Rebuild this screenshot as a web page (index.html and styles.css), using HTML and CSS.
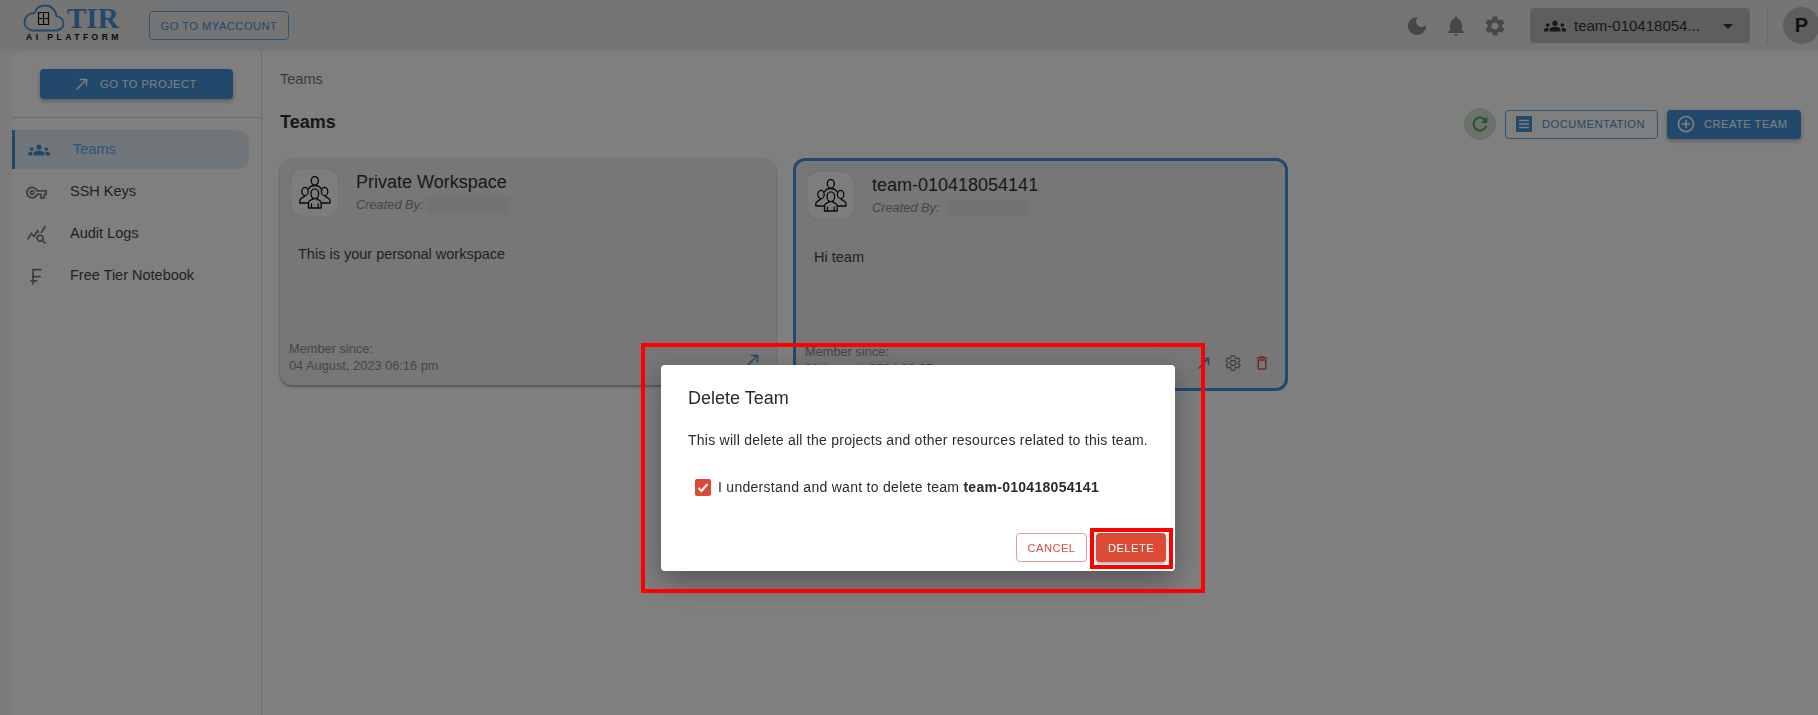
FILE: index.html
```html
<!DOCTYPE html>
<html lang="en">
  <head>
    <meta charset="UTF-8" />
    <meta name="viewport" content="width=device-width, initial-scale=1.0" />
    <title>Teams - TIR AI Platform</title>
    <link rel="stylesheet" href="styles.css">
  </head>
  <body>
    <svg class="defs" width="0" height="0">
      <symbol id="people" viewBox="0 0 32 33">
        <g fill="none" stroke="currentColor" stroke-width="1.3" stroke-linejoin="round" stroke-linecap="round">
          <ellipse cx="15.8" cy="4.8" rx="3.5" ry="4.3" />
          <path d="M9.5 13c1-2.300 3-3.500 6.300-3.500s5.300 1.200 6.300 3.500" />
          <ellipse cx="6" cy="15.500" rx="3.200" ry="4.200" />
          <ellipse cx="25.600" cy="15.500" rx="3.200" ry="4.200" />
          <path d="M.8 27v-2.500c0-2.300 3-2.700 4.700-4.300M.8 27h8.200M31 27v-2.500c0-2.300-3-2.700-4.700-4.300M31 27h-8.200" />
          <ellipse cx="15.800" cy="17.800" rx="3.800" ry="5" />
          <path d="M9.500 32v-5.500c0-2.300 4-2.500 5-4.200M22.200 32v-5.500c0-2.300-4-2.500-5-4.200M9.500 32h12.700M12.500 32v-4M19.200 32v-4" />
        </g>
      </symbol>
      <symbol id="groups" viewBox="0 0 24 24">
        <path d="M12 12.750c1.630 0 3.070.39 4.240.9 1.080.48 1.760 1.560 1.760 2.730V18H6v-1.610c0-1.180.68-2.260 1.760-2.730 1.170-.52 2.610-.91 4.240-.91zM4 13c1.100 0 2-.9 2-2s-.9-2-2-2-2 .9-2 2 .9 2 2 2zm1.130 1.100c-.37-.06-.74-.1-1.130-.1-.99 0-1.930.21-2.780.58C.48 14.900 0 15.620 0 16.430V18h4.500v-1.610c0-.83.23-1.610.63-2.290zM20 13c1.100 0 2-.9 2-2s-.9-2-2-2-2 .9-2 2 .9 2 2 2zm4 3.430c0-.81-.48-1.530-1.220-1.850-.85-.37-1.790-.58-2.780-.58-.39 0-.76.04-1.130.1.4.68.63 1.460.63 2.290V18H24v-1.570zM12 6c1.660 0 3 1.340 3 3s-1.340 3-3 3-3-1.340-3-3 1.340-3 3-3z" />
      </symbol>
      <symbol id="arrow" viewBox="0 0 24 24">
        <path d="M9 5v2h6.590L4 18.590 5.410 20 17 8.410V15h2V5z" />
      </symbol>
      <symbol id="gear" viewBox="0 0 24 24">
        <path d="M19.140 12.940c.04-.3.06-.61.06-.94 0-.32-.02-.64-.07-.94l2.030-1.580c.18-.14.23-.41.12-.61l-1.920-3.320c-.12-.22-.37-.29-.59-.22l-2.390.96c-.5-.38-1.030-.7-1.620-.94l-.36-2.540c-.04-.24-.24-.41-.48-.41h-3.840c-.24 0-.43.17-.47.41l-.36 2.540c-.59.24-1.130.57-1.620.94l-2.390-.96c-.22-.08-.47 0-.59.22L2.740 8.870c-.12.21-.08.47.12.61l2.030 1.580c-.05.3-.09.63-.09.94s.02.64.07.94l-2.030 1.580c-.18.14-.23.41-.12.61l1.920 3.320c.12.22.37.29.59.22l2.390-.96c.5.38 1.030.7 1.620.94l.36 2.540c.05.24.24.41.48.41h3.840c.24 0 .44-.17.47-.41l.36-2.540c.59-.24 1.130-.56 1.620-.94l2.390.96c.22.08.47 0 .59-.22l1.920-3.320c.12-.22.07-.47-.12-.61l-2.010-1.580zM12 15.600c-1.980 0-3.600-1.620-3.600-3.600s1.620-3.600 3.600-3.600 3.600 1.620 3.600 3.600-1.620 3.600-3.600 3.600z" />
      </symbol>
    </svg>

    <header class="topbar">
      <div class="logo">
        <svg class="logo-cloud" viewBox="0 0 42 28">
          <path d="M10 26.500h23c4 0 7.500-3 7.500-7s-3-7-7-7.200C33 6 28.500 1.500 22 1.500c-5 0-9 3-10.500 7.500C6 9 1.500 13 1.500 18.500c0 4.500 4 8 8.500 8z" fill="none" stroke="#4490d8" stroke-width="1.800" />
          <path d="M15.500 8.500h10v12h-10zM20.500 8.500v12M15.500 14.500h10" fill="none" stroke="#111" stroke-width="1.200" />
        </svg>
        <span class="logo-tir">TIR</span>
        <span class="logo-sub">AI PLATFORM</span>
      </div>
      <button class="btn-account">GO TO MYACCOUNT</button>
      <div class="topbar-right">
        <svg class="top-icon" viewBox="0 0 24 24"><path d="M12 3c-4.970 0-9 4.030-9 9s4.030 9 9 9 9-4.030 9-9c0-.46-.04-.92-.1-1.360-.98 1.370-2.580 2.260-4.400 2.260-2.980 0-5.400-2.420-5.400-5.400 0-1.810.89-3.420 2.260-4.400-.44-.06-.9-.1-1.360-.1z" /></svg>
        <svg class="top-icon" viewBox="0 0 24 24"><path d="M12 22c1.100 0 2-.9 2-2h-4c0 1.100.89 2 2 2zm6-6v-5c0-3.070-1.640-5.640-4.500-6.320V4c0-.83-.67-1.500-1.500-1.500s-1.500.67-1.500 1.500v.68C7.630 5.360 6 7.920 6 11v5l-2 2v1h16v-1l-2-2z" /></svg>
        <svg class="top-icon"><use href="#gear" /></svg>
        <div class="team-select">
          <svg class="team-select-icon"><use href="#groups" /></svg>
          <span class="team-select-name">team-010418054...</span>
          <svg class="team-select-caret" viewBox="0 0 24 24"><path d="M7 10l5 5 5-5z" /></svg>
        </div>
        <div class="top-divider"></div>
        <div class="avatar">P</div>
      </div>
    </header>

    <div class="page">
      <aside class="sidebar">
        <div class="sidebar-top">
          <button class="btn-project">
            <svg><use href="#arrow" /></svg>
            GO TO PROJECT
          </button>
        </div>
        <nav class="nav">
          <a class="nav-item active">
            <svg class="nav-icon"><use href="#groups" /></svg>
            <span>Teams</span>
          </a>
          <a class="nav-item">
            <svg class="nav-icon" viewBox="0 0 24 24"><path d="M22 19h-6v-4h-2.680c-1.140 2.420-3.600 4-6.320 4-3.860 0-7-3.140-7-7s3.140-7 7-7c2.720 0 5.170 1.580 6.320 4H24v6h-2v4zm-4-2h2v-4h2v-2H11.940l-.23-.67C11.010 8.340 9.110 7 7 7c-2.760 0-5 2.240-5 5s2.240 5 5 5c2.110 0 4.010-1.340 4.710-3.330l.23-.67H18v4zM7 15c-1.650 0-3-1.350-3-3s1.350-3 3-3 3 1.350 3 3-1.350 3-3 3zm0-4c-.55 0-1 .45-1 1s.45 1 1 1 1-.45 1-1-.45-1-1-1z" /></svg>
            <span>SSH Keys</span>
          </a>
          <a class="nav-item">
            <svg class="nav-icon" viewBox="0 0 24 24"><path d="M19.880 18.470c.44-.7.7-1.510.7-2.390 0-2.490-2.010-4.500-4.500-4.500s-4.500 2.010-4.500 4.500 2.010 4.500 4.490 4.500c.88 0 1.700-.26 2.390-.7L21.580 23 23 21.580l-3.120-3.110zm-3.800.11c-1.380 0-2.500-1.120-2.500-2.500s1.120-2.500 2.500-2.500 2.500 1.120 2.500 2.500-1.120 2.500-2.500 2.500zm-.36-8.500c-.74.02-1.450.18-2.100.45l-.55-.83-3.800 6.180-3.010-3.520-3.630 5.810L1 17l5-8 3 3.500L13 6l2.720 4.080zm2.590.5c-.64-.28-1.330-.45-2.050-.49L21.380 2 23 3.180l-4.690 7.400z" /></svg>
            <span>Audit Logs</span>
          </a>
          <a class="nav-item">
            <svg class="nav-icon" viewBox="0 0 24 24"><path d="M18 5V3H7v13H5v2h2v3h2v-3h4v-2H9v-3h8v-2H9V5h9z" /></svg>
            <span>Free Tier Notebook</span>
          </a>
        </nav>
      </aside>

      <main class="content">
        <div class="breadcrumb">Teams</div>
        <div class="title-row">
          <h1>Teams</h1>
          <div class="actions">
            <span class="btn-refresh">
              <svg viewBox="0 0 24 24"><path d="M17.650 6.350C16.200 4.900 14.210 4 12 4c-4.420 0-7.990 3.580-7.990 8s3.570 8 7.990 8c3.730 0 6.840-2.550 7.730-6h-2.080c-.82 2.330-3.040 4-5.650 4-3.310 0-6-2.690-6-6s2.690-6 6-6c1.660 0 3.140.69 4.220 1.780L13 11h7V4l-2.350 2.350z" /></svg>
            </span>
            <button class="btn-docs">
              <svg viewBox="0 0 16 16"><path d="M0 0h16v16H0z" fill="currentColor" /><path d="M3 4.500h10M3 8h10M3 11.500h10" stroke="#fff" stroke-width="1.500" /></svg>
              DOCUMENTATION
            </button>
            <button class="btn-create">
              <svg viewBox="0 0 24 24"><path d="M13 7h-2v4H7v2h4v4h2v-4h4v-2h-4V7zm-1-5C6.480 2 2 6.480 2 12s4.480 10 10 10 10-4.480 10-10S17.520 2 12 2zm0 18c-4.410 0-8-3.590-8-8s3.590-8 8-8 8 3.590 8 8-3.590 8-8 8z" /></svg>
              CREATE TEAM
            </button>
          </div>
        </div>

        <div class="cards">
          <section class="card">
            <div class="card-head">
              <div class="card-icon"><svg><use href="#people" /></svg></div>
              <div>
                <div class="card-name">Private Workspace</div>
                <div class="card-by">Created By: <span class="redacted"></span></div>
              </div>
            </div>
            <p class="card-desc">This is your personal workspace</p>
            <div class="card-foot">
              <div class="card-since">Member since:<br>04 August, 2023 06:16 pm</div>
              <div class="card-tools">
                <svg class="tool-arrow"><use href="#arrow" /></svg>
              </div>
            </div>
          </section>

          <section class="card card-current">
            <div class="card-head">
              <div class="card-icon"><svg><use href="#people" /></svg></div>
              <div>
                <div class="card-name">team-010418054141</div>
                <div class="card-by">Created By: <span class="redacted"></span></div>
              </div>
            </div>
            <p class="card-desc">Hi team</p>
            <div class="card-foot">
              <div class="card-since">Member since:<br>01 August, 2024 06:05 pm</div>
              <div class="card-tools">
                <svg class="tool-arrow"><use href="#arrow" /></svg>
                <svg class="tool-gear"><use href="#gear" /></svg>
                <svg class="tool-trash" viewBox="0 0 24 24"><path d="M6 19c0 1.100.9 2 2 2h8c1.100 0 2-.9 2-2V7H6v12zM8 9h8v10H8V9zm7.500-5l-1-1h-5l-1 1H5v2h14V4z" /></svg>
              </div>
            </div>
          </section>
        </div>
      </main>
    </div>

    <div class="overlay">
      <div class="modal">
        <h2>Delete Team</h2>
        <p class="modal-text">This will delete all the projects and other resources related to this team.</p>
        <div class="modal-check">
          <span class="checkbox">
            <svg viewBox="0 0 16 17"><path d="M3.500 9l3 3 6-7" fill="none" stroke="#fff" stroke-width="2" /></svg>
          </span>
          <span>I understand and want to delete team <b>team-010418054141</b></span>
        </div>
        <div class="modal-actions">
          <button class="btn-cancel">CANCEL</button>
          <button class="btn-delete">DELETE</button>
        </div>
      </div>
      <div class="mark mark-outer"></div>
      <div class="mark mark-inner"></div>
    </div>
  </body>
</html>
```

FILE: styles.css
```css
* {
  box-sizing: border-box;
}

html,
body {
  height: 715px;
  overflow: hidden;
}

body {
  margin: 0;
  background: #f6f6f6;
  font-family: "Liberation Sans", Arial, sans-serif;
  color: #333;
}

button {
  font-family: "Liberation Sans", Arial, sans-serif;
  font-size: 11.2px;
  letter-spacing: 0.45px;
  cursor: pointer;
}

.defs {
  position: absolute;
}

svg {
  fill: currentColor;
}

/* top bar */
.topbar {
  display: flex;
  align-items: center;
  height: 51px;
  padding-left: 23px;
  background: #ebebeb;
}

.logo {
  display: grid;
  grid-template-columns: 44px auto;
  align-content: start;
  width: 126px;
  height: 45px;
  margin-top: 4px;
  align-self: flex-start;
}

.logo-cloud {
  width: 42px;
  height: 28px;
}

.logo-tir {
  font-family: "Liberation Serif", serif;
  font-weight: 700;
  font-size: 29px;
  line-height: 28px;
  color: #4490d8;
}

.logo-sub {
  grid-column: 1 / 3;
  margin: 1px 0 0 3px;
  font-size: 8.5px;
  font-weight: 700;
  line-height: 9px;
  letter-spacing: 3.5px;
  white-space: nowrap;
  color: #111;
}

.btn-account {
  width: 140px;
  height: 29px;
  padding: 0;
  border: 1px solid #5aa8e6;
  border-radius: 4px;
  background: transparent;
  color: #4490d8;
}

.topbar-right {
  display: flex;
  align-items: center;
  margin-left: auto;
  height: 100%;
  color: #8f8f8f;
}

.top-icon {
  width: 24px;
  height: 24px;
  margin-right: 15px;
}

.team-select {
  display: flex;
  align-items: center;
  width: 220px;
  height: 35px;
  margin-left: 8px;
  padding-left: 14px;
  border-radius: 4px;
  background: #bcbcbc;
  color: #333;
}

.team-select-icon {
  width: 22px;
  height: 22px;
  margin-right: 8px;
}

.team-select-name {
  width: 137px;
  font-size: 15px;
}

.team-select-caret {
  width: 24px;
  height: 24px;
  margin-left: 5px;
}

.top-divider {
  width: 1px;
  height: 39px;
  margin-left: 17px;
  background: #d2d2d2;
}

.avatar {
  flex: none;
  width: 37px;
  height: 37px;
  margin: 0 -2px 0 15px;
  border-radius: 50%;
  background: #bdbdbd;
  font-size: 20px;
  font-weight: 700;
  line-height: 37px;
  text-align: center;
  color: #222;
}

/* page */
.page {
  display: flex;
  height: 664px;
  padding-left: 12px;
}

.sidebar {
  flex: none;
  width: 250px;
  border-right: 1px solid #d6d6d6;
  border-top-left-radius: 14px;
  background: #fff;
}

.sidebar-top {
  height: 67px;
  padding: 18px 28px 0;
  border-bottom: 1px solid #d6d6d6;
}

.btn-project {
  display: flex;
  align-items: center;
  width: 193px;
  height: 30px;
  padding: 0 0 0 33px;
  border: none;
  border-radius: 4px;
  background: #4490d8;
  box-shadow: 0 2px 4px rgba(0, 0, 0, 0.3);
  color: #fff;
}

.btn-project svg {
  width: 18px;
  height: 18px;
  margin-right: 9px;
}

.nav {
  padding-top: 12px;
}

.nav-item {
  display: flex;
  align-items: center;
  width: 237px;
  height: 42px;
  padding-left: 14px;
  font-size: 14.5px;
  color: #444;
}

.nav-item span {
  margin: -2px 0 0 23px;
}

.nav-item.active {
  height: 39px;
  margin-bottom: 2px;
  padding-left: 13px;
  border-left: 3px solid #4490d8;
  border-radius: 0 12px 12px 0;
  background: #e0ecf4;
  color: #5aa8ee;
}

.nav-icon {
  flex: none;
  width: 21px;
  height: 21px;
  color: #7d7d7d;
}

.nav-item.active .nav-icon {
  width: 22px;
  height: 22px;
  color: #4490d8;
}

/* content */
.content {
  flex: 1;
  padding: 18px 17px 0 18px;
  background: #fff;
}

.breadcrumb {
  font-size: 14.5px;
  line-height: 20px;
  color: #777;
}

.title-row {
  display: flex;
  align-items: center;
  justify-content: space-between;
  height: 32px;
  margin-top: 17px;
}

.title-row h1 {
  margin: 0;
  font-size: 18px;
  color: #333;
}

.actions {
  display: flex;
  align-items: center;
  padding-top: 4px;
}

.btn-refresh {
  display: flex;
  align-items: center;
  justify-content: center;
  width: 32px;
  height: 32px;
  margin-right: 9px;
  border-radius: 50%;
  background: #d4e4d4;
  color: #4aa04a;
}

.btn-refresh svg {
  width: 22px;
  height: 22px;
}

.btn-docs,
.btn-create {
  display: flex;
  align-items: center;
  height: 29px;
  padding: 0;
  border-radius: 4px;
}

.btn-docs {
  width: 153px;
  margin-right: 9px;
  padding-left: 10px;
  border: 1px solid #5aa8e6;
  background: transparent;
  color: #4490d8;
}

.btn-docs svg {
  width: 16px;
  height: 16px;
  margin-right: 10px;
}

.btn-create {
  width: 134px;
  padding-left: 9px;
  border: none;
  background: #4490d8;
  box-shadow: 0 2px 4px rgba(0, 0, 0, 0.3);
  color: #fff;
}

.btn-create svg {
  width: 20px;
  height: 20px;
  margin-right: 8px;
}

.cards {
  display: flex;
  align-items: flex-start;
  gap: 17px;
  margin-top: 20px;
}

.card {
  display: flex;
  flex-direction: column;
  width: 496px;
  height: 227px;
  padding: 11px 11px 11px;
  border-radius: 12px;
  background: #eee;
  box-shadow: 0 2px 3px rgba(0, 0, 0, 0.35);
}

.card-current {
  width: 495px;
  height: 233px;
  border: 3px solid #4490d8;
  box-shadow: none;
}

.card-head {
  display: flex;
}

.card-icon {
  display: flex;
  align-items: center;
  justify-content: center;
  width: 47px;
  height: 47px;
  margin-right: 18px;
  border-radius: 11px;
  background: #fbfbfb;
  box-shadow: 0 0 1px rgba(0, 0, 0, 0.3);
  color: #111;
}

.card-icon svg {
  width: 32px;
  height: 33px;
}

.card-name {
  margin-top: 1px;
  font-size: 18px;
  line-height: 24px;
  color: #333;
}

.card-by {
  display: flex;
  margin-top: 3px;
  font-size: 12.8px;
  font-style: italic;
  line-height: 16px;
  color: #8d8d8d;
}

.redacted {
  display: block;
  width: 81px;
  height: 16px;
  margin-left: 3px;
  background: #e4e4e4;
  filter: blur(1.5px);
}

.card-current .redacted {
  margin-left: 6px;
}

.card-desc {
  flex: 1;
  margin: 28px 0 0 7px;
  font-size: 14.5px;
  line-height: 20px;
  color: #444;
}

.card-foot {
  display: flex;
  align-items: flex-end;
  justify-content: space-between;
  margin-left: -2px;
}

.card-since {
  font-size: 12.8px;
  line-height: 17px;
  color: #8d8d8d;
}

.card-tools {
  display: flex;
  align-items: center;
  gap: 11px;
  margin: 0 3px 5px 0;
  color: #4490d8;
}

.card-tools svg {
  width: 18px;
  height: 18px;
}

.tool-gear {
  fill: none;
  stroke: #777;
  stroke-width: 1.6;
  color: #777;
}

.tool-trash {
  color: #e0534c;
}

/* dialog */
.overlay {
  position: fixed;
  top: 0;
  left: 0;
  right: 0;
  bottom: 0;
  background: rgba(0, 0, 0, 0.5);
}

.modal {
  position: absolute;
  left: 661px;
  top: 365px;
  width: 514px;
  height: 206px;
  padding: 20px 26px 0 27px;
  border-radius: 4px;
  background: #fff;
  box-shadow: 0 10px 30px rgba(0, 0, 0, 0.35);
  color: #2b2b2b;
}

.modal h2 {
  margin: 0;
  font-size: 18px;
  font-weight: 400;
  line-height: 26px;
}

.modal-text {
  margin: 19px 0 0;
  font-size: 14px;
  line-height: 20px;
  letter-spacing: 0.25px;
  white-space: nowrap;
}

.modal-check {
  display: flex;
  align-items: center;
  gap: 7px;
  margin: 27px 0 0 7px;
  font-size: 14px;
  line-height: 20px;
  letter-spacing: 0.28px;
  white-space: nowrap;
}

.checkbox {
  display: block;
  width: 16px;
  height: 17px;
  border-radius: 2px;
  background: #db4a36;
}

.checkbox svg {
  display: block;
}

.modal-actions {
  position: absolute;
  right: 9px;
  bottom: 9px;
  display: flex;
  gap: 9px;
}

.btn-cancel,
.btn-delete {
  height: 29px;
  padding: 0;
  border-radius: 4px;
}

.btn-cancel {
  width: 71px;
  border: 1px solid #e89a94;
  background: #fff;
  color: #e04a3f;
}

.btn-delete {
  width: 70px;
  border: none;
  background: #db4a36;
  box-shadow: 0 2px 3px rgba(0, 0, 0, 0.3);
  color: #fff;
}

.mark {
  position: absolute;
  border: 4px solid #f00;
}

.mark-outer {
  left: 641px;
  top: 343px;
  width: 564px;
  height: 250px;
}

.mark-inner {
  left: 1090px;
  top: 528px;
  width: 83px;
  height: 41px;
}
```
